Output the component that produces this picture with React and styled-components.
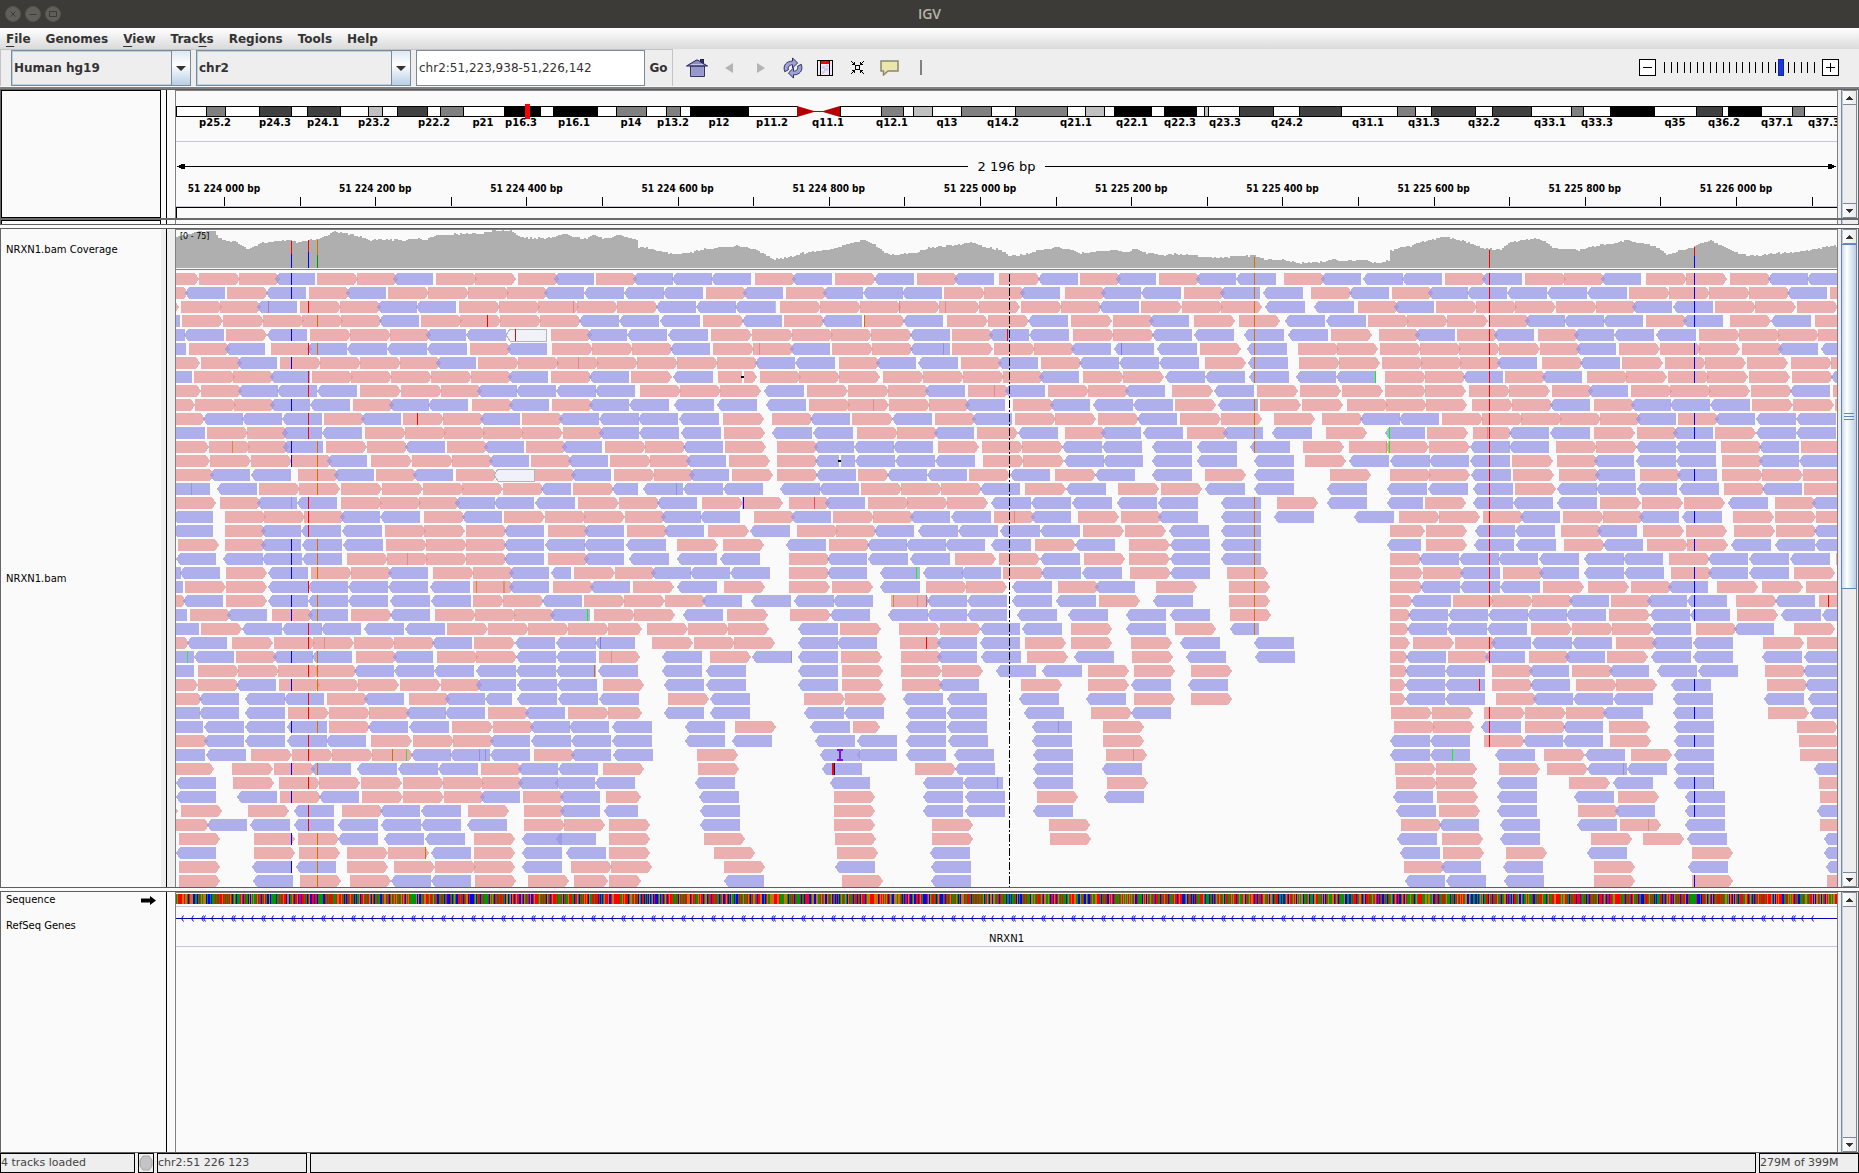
import React from "react";
import styled, { createGlobalStyle, css } from "styled-components";

const Global = createGlobalStyle`
  * { box-sizing: border-box; }
  body { margin: 0; background: #eeeeee; font-family: "DejaVu Sans", sans-serif; font-size: 10px; color: #000; }
  button, input, select { font-family: inherit; margin: 0; }
`;

/* ---------- plot geometry ---------- */
const LEFT = 176;
const PLOT = 1661;
const PITCH = 14;
const READ_H = 12;
const pc = (x) => `${((x - LEFT) / PLOT) * 100}%`;

/* ---------- alignment tiles: r = forward, b = reverse, s = highlighted; optional :length ---------- */
const TILES = [
  {
    origin: 160, unit: 2.6133,
    rows: `r-6 r101 r206 b301 r410 r515 b610 r721 r823 r936 b1030 r1139 b1237 b1339 b1441 r1555
r-35 b65 r175 b277 r389 b486 r596 r700 r805 r908 b1004 b1109 b1212 b1314 r1427 b1524
r-57 r55 r158 b253 r366 r470 b567 b669 r781 r886 r989 r1090 r1194 b1296 b1400 b1503
b-53 r57 r165 r269 r371 r474 b572 r682 r785 r889 r993 b1096 b1199 b1306 r1419 b1520
b-40 b62 r172 b279 r392 r497 r601 b695 b799 s905 r1022 b1117 b1220 b1327 r1440 r1547
b-37 r76 b169 r290 b385 b488 b593 b697 r810 b906 r1024 r1129 r1233 b1332 r1445 r1550
r-2 r107 b201 r314 r418 r523 r628 b721 r831 r936 r1039 r1142 r1247 r1351 r1456 b1556
b-21 r89 r192 b287 r397 r500 r604 r708 r813 b909 r1022 b1121 r1231 b1340 r1458:102
r0 r107 b204 b306 b410 r523 r629 r734 b828 b931 b1035 b1137 r1254 r1359 r1463
r-16 r91 r194 b287 b392 r504 b598 b701 r815 b912 r1024 b1121 b1225 b1342 b1456
r10 b113 b215 b319 r429 b526 r635 r740 b835 r946 b1042 b1146 b1250 b1356 r1471
b13 r123 r227 b319 b423 r536 r640 r743 r845 r947 r1052 b1147 b1253 b1361 r1474
r20 r128 r229 b322 r434 r541 b640 r750 b846 r956 b1050 r1163 r1267 b1366 r1477
r24 r131 r237 r343 b436 r551 r658 r763 b860 r970 b1066 r1176 r1280 b1374 r1487
r35 b130 b237 r361 b454 r564 b661 r774 s872 r980 b1074 r1186 r1290 b1383 r1495
b26 b148 r259 r363 r473 r580 r687 r790 r896 b995:79 r1079 b1180:67 b1261 b1366 b1470
r39 r157 b253 b358 r473 r574 r678 b771 b874 b980 r1092 r1200 b1298 r1416 r1522
b34 r170 r273 r377 b471 b575 r690 b789 r899 r1006 r1109 r1214 b1310 b1411 r1552
b34 r170 b264 b369 b475 r588 r691 r800 b899 r1014 b1108 r1220 b1317 r1432 b1543
r47 r170 b263 b371 b477 r591 r694 r800 b900 b1005 b1108 b1217 r1351 r1471
b41 b164 b267 b371 r489 r593 r696 r800 b900 r1014 b1109 b1225 b1350 b1464
b-50 b52 r172 b282 r395 r500 b595 r713 r818 b912 b1023:51 r1082 r1189 b1283 b1386 b1490
b-45 r65 r172 b282 b387 b492 b596 b705 r818 b912 r1027 b1123 r1236 b1350 r1474
r-38 b60 r172 b282 b388 b492 b600 b707 r818:80 r897 b998 r1108 r1213 r1320 b1416 b1545
b-34 r78 b175 r293 b386 r499 b601 r719 r822 r926 b1019 r1134 r1239 b1366 r1482
b-3 r107 b214 b318 b421 b532 b640 r750 r856 r962 r1067 r1170:90 r1273 r1380 r1484
r-32 b70 r188 r298 r400 r507 r612 b710 r821 b927 b1034 b1136 r1286 r1396 r1501
b-16 b88 r199 b295 b398 r512 b610 r724 r827 b931 b1035 r1147 b1311 r1437 b1546
b-16 r99 r204 r308 r407 b507 b612 b716 b825 b930 b1036 b1145 b1313 b1428
r-9 r99 b198 r311 r412 r518 r627 r734 b827 b932 b1037 r1158 b1316 b1428
r3 b102 b221 b324 r436 b533 r651 b745 b850:70 b932 b1039 b1148 r1328 b1437
b0 b101 b221 r335 r442 r547 b642 b745 r857 b953 r1066 r1171:88 b1318 b1438
b7 b115 b221 b331 r442 b543 b652 r763 r870 b967 b1069 b1180 b1373 r1503
r17 b116 b221 b331 b433 r551 r661 r766 b862 b969 b1074 b1180 b1373 b1494
b13 b121 r238 r345 r449 r554 b656 b757 b862 r977 b1074 b1183 r1403
r34 r188 r298 b394 b514 b621 b726 r839 b935 b1040 r1158 r1406
b41 r191 r311 r416 r525 r635 r739 r841 b936 b1032 b1138 b1397
b41 b200 r314 b415 r528 r635 r741 b836 r949 b1045 r1166:91 b1408
r-60 r55 r230 b351 r476 b574 b683 r805 r951 b1045 b1159:90 b1410
r22 b122 b236 b351 b466 b577 b683 b801 r951 r1056 r1173 b1410
r50 r246 r361 b466 b586 b692 r821 b946 b1034 r1173 r1422
b41 r246 r363 r489 r596 b709 r821 b947 b1060 r1173 r1448
r50 b241 b356 r489 r612 r719 r821 b947 r1074 r1179 r1474
r50 b244 r366 r497 b603 b709 r823 r962 r1082:90 r1173:84 b1473`,
  },
  {
    origin: 740, unit: 2.6133,
    rows: `b135 r248 b350 r463 b560 r677 b778 r889 b982 r1095 b1191 b1296
r120 b217 b321 b423 r533 r638 b732 r849 b944 b1048 r1160 b1254 b1366
r105 r209 r313 r416 r520 r625 r734 r838 b938 r1048 r1154 r1257 b1371
r115 b214 r323 b425 r541 r648 b752 r865 r975 b1068 r1186 r1304
r136 r239 r342 b445 r554 b650 b755 r870 r975 b1076 b1186 b1318
b131 r240 r345 b444 r554 r664 r768 b865 b977 b1089 r1202 b1324
b144 r259 b356 b465 r578 b675 r787 b886 b990 b1096 r1215 b1327
r52 r155 r260 r374 r478 r582 r687 b781 r896 r1001 b1110 b1215 b1330
b62 r175 r281 r387 b483 r596 b692 r805 r909 b1006 r1129 b1238 r1351
b67 r180 r283 r389 r494 b589 r713 b810 b922 b1027 r1137 b1249 r1359
r84 b182 r293 b397 r510 b606 r719 r823 r936 b1037 r1150 r1257 r1396
b83 b190 r306 r409 b507 r619 b726 r849 b944 b1052 r1168 b1262 b1389
r97 b194 b298 b400 r517 r632 r738 b841 b946 b1076 b1193 b1332
r97 b197 b300 b406 b509 r635 r739 b846 b949 b1076 b1193 b1342
r97 b198 r308:82 b384 b489 r598 b705 r823 b927 b1076 r1215 b1342
b104 b206 r316 r421 r524 b627 r745 b851 r988 r1100 b1215 b1344
r128 b222 r335 r437 r541 b655 b761 b867 b985 b1092 b1257 r1403
b134 r243 r348 b444 b551 r664 b760 r883 r996 b1092 b1257 b1395
r149 r252 b349 b464 b569 b679 b785 r896 r1006 b1120 b1258
b119 r233 b331 b434 b536 b655 r771 b875 r1017 b1123 b1258
r128 b227 b334 b445 r562 r677 b785 r899 r1017 b1125 b1258
r128 b227 b367 b477 b578 r687 b786 b893 r1019 b1125 r1273
r128 r240 b367 r486 r591 b710 r831 b927 r1087 r1278
b140 b243 r395:103 b489 b593 b712 b825 r938 b1079 r1278
r131 b235 b386 b488 b593 b725 b856 b1010 b1125 r1281
b151 r261 r416 r523 b628 b736 r865 b1010 r1137 b1280:76
b151 b253 r418 b516 b628 r745 r865 r1022 b1151 b1344
b151 r264 r421 b516 b631 r750 b874 r1024 b1165 b1347
b151 r267 r421 r528 b670 b790 r909 r1030 r1179
b151 r267 r423 b520 r734 r909 b1021 b1170
r167 r274 b427 b540 b728 b905 r1030 r1179
b166 b271 b433 b540 b741 r917 b1021
b184 r295:71 b435 b540 b762 r949
b197 b307 b435 b543 b762 r949
b208 b307 b435 b560 b767 r956
b215 r457 b563 b767 b947
b234 b477 b582 b767 r959
r246 b479 b587 r776 b952
r246 b479 b587 b767
r246 r502 r808
r248 r502 r810
r253 b496
b249 b498
r267 b498`,
  },
  {
    origin: 1280, unit: 2.7081,
    rows: `r11 b110 b224 b330 r447 b547 r663 r769 b869 r991 r1099 r1219 b1321 b1427
r84 b186 r303 b400 b506 b615 b722 b831 r945 r1053 r1161 r1270 b1372 r1489
b91 r211 b308 r422 r531 r636 r747 r856 b953 b1064 r1178 r1286 r1400
b13 b124 r238 r345 r452 r565 b663 b768 b874 r991 b1091 r1219 b1329 r1449
b23 r138 r268 b365 r479 b580 r699 b797 b904 b1018 r1135 r1243 r1349 r1457
r49 r154 r271 r379 r486 r593 r704 b801 r918 r1029 r1135 r1251 b1348 b1466
r51 r160 r276 r383 r488 b587 r710 b812 r926 r1043 r1151 r1265 r1384 r1492
b42 b152 r284 r393 b495 r609 b709 r831 r938 r1051 r1157 r1270 r1387 b1491
r54 r168 r284 r393 r512 r620 r737 b833 r951 r1057 r1163 r1276 b1380 r1498
r60 r181 r288 r396 r520 r628 b731 r850 b950 b1055 b1164 r1278 r1389 r1503
r114 b216 b322 r439 r547 r653 r759 r867 b963 r1078 b1178 b1289 b1397
r125 b283 r398 r523:106 b619 b730 r850 r967 b1064 r1178 b1288 b1397
r62 r187 r293 r404 b514 b620 r747 r856 b965 b1072 r1194 b1297 r1411
r68 b186 b297 b404 b514 r628 r750 b850 b965 b1072 r1197 b1297 b1405
r135 r298 r404 b517 r631 r756 b852 r975 b1074 r1197 r1306 r1416
b126 b289 b400 b522 r636 b749 b857 b966 b1080 r1202 b1305 r1419
b128 b289:98 r393 b522 b631 b749 r867 r980 r1094 b1212 r1341 b1441
b201 r322 r431 r550 b649 r766 r875 b972 b1090 r1227 r1341 r1451
r298:94 r395 b527 b636 r761 b858 r983 r1099 r1229 r1343 b1445
b289:93 r395 b526 b638 r769 b874 r994 r1102 b1220 b1340 b1450
r298:88 b376 b484 b590 b701 b822 b928 r1053 b1158 b1269 b1380 r1506
r298:90 r387 b487 r604 b701 b822 b931 r1059 b1160 b1271 r1392
r298:90 b378 b487 b595 r712 r834 r951 b1050 r1183 r1305 r1424
r298:62 b354 r469 r573 r682 b782 r896 b993 b1101 r1235 b1340 r1460
r298:56 b347 b454 b563 b668 b774 r891 b1002 b1110 r1238 b1356 b1468
r298:52 b343 b452 b560 r680 r791 r899 b1004 r1127 b1229 r1392
r298:54 r360 r474 b571 b682 b790 r910 b1007 b1118 r1308 r1427
r298:50 b340 r455 b554 r674 b771 r886 b1006 b1118 b1304 b1418
r298:50 b339 b446 r574 b674 r791 b890 b1022 b1131 r1313 b1417
r298:44 b338 b446 r574 b676 r802 r910 b1058 r1319 b1422
r298:42 b338 b446 r585 b685 b794 b902 b1063 b1310 b1429
r301 r412 r552 r663 r775 b874 b1063 r1322 b1434
r309 r414 b543 r663 b766 r891 b1066 r1400
b299 b407 r552 b657 b766 r894 b1066 r1406
b299 b406 b583 r715 b825 r951 b1066 r1408
r311 r422 r593 r723 b831 b941 b1066 b1447
r314 r422 b589 r783 b901 b1068 r1460
b307 r425 b589 b797 r915 b1096 r1462
b315 r431 b589 r807 b906 b1098 b1455
r328 b430 b595 b803 r921 b1098 r1462
b318 r439 b597 r842 r983 b1101 b1474
b326 r441 r612 b832 r1116 b1474
r336 b435 b603 r850 b1106 b1479
b338 b449 b606 r850 r1116 r1481`,
  },
];

const READS = TILES.flatMap(({ origin, unit, rows }) =>
  rows.split("\n").flatMap((line, row) =>
    line.trim().split(" ").map((tok) => {
      const [start, len] = tok.slice(1).split(":").map(Number);
      const x = Math.round(origin + start / unit) - LEFT;
      const w = len ? Math.round(len / unit) : tok[0] === "r" ? 41 : 40;
      return { kind: tok[0], row, x, w };
    })
  )
);

const BLUE = "#0000ff";
const RED = "#ff0000";
const ORANGE = "#d17105";
const GREEN = "#00ff00";
const FADE_R = "rgba(200,90,90,.4)";
const FADE_B = "rgba(100,100,200,.4)";

/* variant columns: x, colour, rows (1-based) */
const COLUMNS = [
  [291, BLUE, [1, 2, 5, 7, 10, 13, 14, 20, 21, 22, 24, 25, 28, 30, 33, 36, 38, 41, 43]],
  [308, RED, [3, 6, 8, 9, 11, 12, 17, 18, 19, 23, 26, 27, 29, 31, 32, 34, 35, 37, 39, 40]],
  [317, ORANGE, [4, 6, 13, 14, 15, 16, 20, 21, 22, 24, 25, 28, 29, 30, 33, 36, 41, 42, 43, 44]],
  [1254, ORANGE, [1, 2, 3, 4, 5, 6, 7, 8, 10, 11, 12, 13, 17, 18, 19, 20, 21, 22, 23, 24, 25, 26]],
  [1489, RED, [1, 2, 3, 4, 5, 6, 7, 8, 9, 10, 11, 12, 13, 14, 15, 16, 17, 18, 19, 20, 21, 22, 23, 24, 27, 28, 32, 33, 34]],
  [1694, BLUE, [1, 2, 3, 4, 6, 7, 8, 11, 12, 15, 18, 20, 22, 23, 24, 25, 30, 32, 34, 37, 38, 39, 44]],
];

/* isolated mismatches: row, x, colour, width */
const MARKS = [
  [3, 268, "#9a7cc8"], [3, 573, FADE_R], [4, 487, RED], [5, 515, RED], [7, 557, FADE_R], [7, 578, FADE_R],
  [11, 417, RED], [13, 232, "#dc8246"], [16, 191, "#8c9bd2"], [16, 676, FADE_B], [17, 291, FADE_B], [17, 743, BLUE],
  [21, 407, FADE_R], [23, 476, "#dc8246"], [23, 503, "#d9917a", 2], [25, 587, GREEN], [27, 324, FADE_R],
  [27, 600, "#7878eb"], [28, 187, "#3cdc6e"], [28, 611, FADE_R], [29, 594, ORANGE], [35, 392, ORANGE],
  [35, 406, "#3cdc3c"], [35, 479, FADE_B], [35, 485, FADE_B], [42, 425, ORANGE],
  [3, 775, FADE_B], [3, 899, FADE_R], [3, 945, FADE_R], [4, 864, ORANGE], [5, 1007, RED], [6, 759, FADE_R],
  [6, 943, FADE_B], [6, 1121, "#7878eb"], [9, 994, FADE_R], [10, 873, FADE_R], [17, 814, "#f04b4b"],
  [18, 1014, "#eb8282"], [22, 916, GREEN], [24, 893, "#dc8246"], [24, 917, FADE_R], [24, 926, "#a078be"],
  [27, 926, RED], [28, 791, FADE_B], [33, 1058, FADE_B], [35, 1133, FADE_R], [36, 832, RED, 2], [36, 834, "#000090"],
  [37, 997, FADE_B], [8, 1375, GREEN], [12, 1389, GREEN], [13, 1389, GREEN], [13, 1386, "#d2966e"],
  [12, 1487, FADE_R], [24, 1828, RED], [30, 1479, RED], [35, 1452, GREEN], [36, 1623, FADE_B], [37, 1713, FADE_B],
  [40, 1648, FADE_R],
];

const DELETIONS = [[8, 742], [14, 839]];

/* coverage profile: x, y of the top edge */
const COVER = [
  176, 237, 186, 235, 198, 231, 215, 232, 217, 238, 237, 243, 246, 249, 255, 246, 261, 243, 277, 241, 291, 240, 297, 243,
  308, 240, 318, 239, 326, 235, 334, 231, 344, 234, 352, 235, 364, 238, 370, 240, 380, 239, 389, 240, 403, 240, 415, 239,
  427, 239, 437, 235, 455, 234, 478, 234, 492, 231, 510, 230, 518, 237, 530, 238, 550, 238, 563, 234, 573, 237, 585, 239,
  593, 235, 605, 239, 620, 235, 628, 238, 637, 240, 638, 247, 652, 249, 661, 252, 675, 255, 691, 252, 703, 249, 719, 248,
  735, 246, 747, 247, 758, 251, 772, 259, 790, 257, 802, 253, 826, 250, 836, 248, 849, 243, 863, 240, 871, 243, 885, 253,
  893, 255, 913, 253, 928, 248, 944, 246, 956, 245, 970, 242, 980, 246, 1000, 250, 1009, 256, 1023, 255, 1039, 250,
  1055, 247, 1071, 250, 1079, 253, 1094, 252, 1110, 250, 1126, 252, 1136, 249, 1146, 253, 1162, 255, 1174, 254,
  1193, 255, 1205, 257, 1217, 258, 1240, 256, 1254, 256, 1264, 259, 1283, 260, 1299, 263, 1323, 262, 1333, 259,
  1343, 261, 1362, 260, 1378, 263, 1389, 260, 1390, 251, 1398, 248, 1410, 246, 1418, 242, 1429, 240, 1443, 237,
  1461, 240, 1473, 245, 1487, 249, 1501, 249, 1508, 243, 1524, 240, 1534, 238, 1544, 241, 1552, 248, 1580, 250,
  1587, 248, 1599, 245, 1615, 243, 1627, 240, 1639, 243, 1653, 246, 1666, 254, 1674, 252, 1690, 248, 1698, 244,
  1710, 241, 1720, 245, 1734, 252, 1749, 256, 1769, 254, 1781, 253, 1801, 252, 1812, 250, 1828, 246, 1838, 246,
];

const noise = (n) => {
  let t = (n * 2654435761) >>> 0;
  t ^= t >>> 15;
  t = Math.imul(t, 2246822519) >>> 0;
  t ^= t >>> 13;
  return (t >>> 0) / 4294967296;
};

const coverPath = (() => {
  let d = "M0 38";
  let k = 0;
  for (let x = LEFT; x < LEFT + PLOT; x += 2) {
    while (k + 4 < COVER.length && COVER[k + 2] <= x) k += 2;
    const t = (x - COVER[k]) / (COVER[k + 2] - COVER[k]);
    const y = COVER[k + 1] + (COVER[k + 3] - COVER[k + 1]) * t + (noise(x) - 0.5) * 1.6;
    d += `V${Math.max(0, Math.round(y - 230))}H${x - LEFT + 2}`;
  }
  return d + "V38Z";
})();

const COVER_BARS = [
  [291, 241, 254, RED], [291, 254, 268, BLUE], [308, 240, 252, RED], [308, 252, 268, BLUE],
  [317, 240, 255, ORANGE], [317, 255, 268, "#009600"], [1254, 257, 268, ORANGE], [1489, 250, 268, RED],
  [1694, 247, 256, RED], [1694, 256, 268, BLUE],
];

/* chromosome bands: start x and shade */
const W = "#ffffff", L = "#c0c0c0", G = "#808080", D = "#404040", K = "#000000";
const BANDS = [
  [176, W], [206, G], [225, W], [259, D], [291, W], [307, D], [340, W], [368, L], [382, W], [397, D], [427, W],
  [440, G], [463, W], [504, K], [540, W], [553, K], [597, W], [616, G], [646, W], [666, G], [680, W], [690, K],
  [748, W], [797, null], [840, W], [881, G], [903, W], [913, L], [932, W], [961, G], [991, W], [1015, G], [1067, W],
  [1085, L], [1104, W], [1114, K], [1151, W], [1164, K], [1196, W], [1204, L], [1208, W], [1239, D], [1273, W],
  [1299, D], [1341, W], [1397, G], [1415, W], [1431, D], [1475, W], [1492, D], [1531, W], [1571, G], [1583, W],
  [1610, K], [1654, W], [1696, D], [1722, W], [1728, K], [1761, W], [1792, G], [1804, W], [1837, null],
];

const BAND_LABELS = [
  ["p25.2", 215], ["p24.3", 275], ["p24.1", 323], ["p23.2", 374], ["p22.2", 434], ["p21", 483], ["p16.3", 521],
  ["p16.1", 574], ["p14", 631], ["p13.2", 673], ["p12", 719], ["p11.2", 772], ["q11.1", 828], ["q12.1", 892],
  ["q13", 947], ["q14.2", 1003], ["q21.1", 1076], ["q22.1", 1132], ["q22.3", 1180], ["q23.3", 1225], ["q24.2", 1287],
  ["q31.1", 1368], ["q31.3", 1424], ["q32.2", 1484], ["q33.1", 1550], ["q33.3", 1597], ["q35", 1675],
  ["q36.2", 1724], ["q37.1", 1777], ["q37.3", 1824],
];

const RULER = Array.from({ length: 22 }, (_, i) => ({
  x: 224 + i * 75.6,
  label: i % 2 ? null : `51 ${224 + Math.floor(i / 10)} ${String((i % 10) * 100).padStart(3, "0")} bp`,
}));

/* ---------- window chrome ---------- */
const Frame = styled.div`
  display: flex;
  flex-direction: column;
  min-height: 100vh;
  overflow: hidden;
`;

const TitleBar = styled.header`
  display: grid;
  grid-template-columns: 1fr auto 1fr;
  align-items: center;
  height: 28px;
  padding: 0 5px;
  background: #3c3b37;
`;

const Title = styled.h1`
  margin: 0;
  font: 600 14px/20px "Open Sans", sans-serif;
  color: #b8b5a9;
`;

const WindowButtons = styled.div`
  display: flex;
  gap: 4px;
`;

const WindowButton = styled.button`
  width: 16px;
  height: 16px;
  padding: 0;
  border: 1px solid #56554f;
  border-radius: 50%;
  background: #605f5a;
  color: #3c3b37;
  svg { display: block; width: 14px; height: 14px; }
`;

const MenuBar = styled.nav`
  display: flex;
  gap: 15px;
  height: 21px;
  padding: 0 6px;
  background: linear-gradient(#ffffff, #dadada);
`;

const MenuItem = styled.button`
  padding: 0;
  border: 0;
  background: none;
  font-size: 12px;
  line-height: 20px;
  font-weight: bold;
  color: #333;
  u { text-underline-offset: 3px; }
`;

const ToolBar = styled.div`
  display: flex;
  align-items: center;
  height: 38px;
  padding-right: 20px;
  border-bottom: 1px solid #f6f6f6;
  background: #eeeeee;
`;

const LocusGroup = styled.form`
  display: flex;
  align-items: center;
  align-self: stretch;
  gap: 5px;
  padding-left: 10px;
  border: 1px solid #c4c4c4;
  border-bottom: 0;
`;

const Combo = styled.label`
  position: relative;
  display: block;
  width: ${(p) => p.$width}px;
  height: 36px;
  border: 1px solid #7a8a99;
  svg {
    position: absolute;
    top: 0;
    right: 0;
    width: 19px;
    height: 100%;
    border-left: 1px solid #7a8a99;
    background: linear-gradient(#dde8f3, #ffffff 40%, #b8cfe5);
    pointer-events: none;
  }
`;

const Select = styled.select`
  appearance: none;
  width: 100%;
  height: 100%;
  padding: 0 20px 0 1px;
  border: 1px solid #b8cfe5;
  background: #eeeeee;
  font-size: 12px;
  font-weight: bold;
  color: #333;
`;

const LocusInput = styled.input`
  width: 229px;
  height: 36px;
  padding: 0 2px;
  border: 1px solid #7a8a99;
  border-radius: 0;
  background: #fff;
  font-size: 12px;
  color: #333;
`;

const GoButton = styled.button`
  align-self: stretch;
  width: 27px;
  margin-left: -5px;
  padding: 0;
  border: 0;
  background: none;
  font-size: 12px;
  font-weight: bold;
  color: #333;
`;

const IconRow = styled.div`
  display: flex;
  flex: 1;
  align-items: center;
  padding-left: 8px;
`;

const IconButton = styled.button`
  display: grid;
  place-items: center;
  width: 32px;
  height: 24px;
  padding: 0;
  border: 0;
  background: none;
  svg { display: block; }
`;

const IconRule = styled.span`
  width: 2px;
  height: 15px;
  margin-left: 15px;
  background: #808080;
`;

const Zoomer = styled.div`
  display: flex;
  align-items: center;
  gap: 5px;
`;

const ZoomButton = styled.button`
  width: 17px;
  height: 17px;
  padding: 0;
  border: 1px solid #000;
  background: #fff;
  svg { display: block; width: 15px; height: 15px; }
`;

const ZoomTrack = styled.div`
  position: relative;
  width: 156px;
  height: 17px;
  svg { display: block; width: 100%; height: 100%; }
`;

const ZoomRange = styled.input`
  position: absolute;
  inset: 0;
  width: 100%;
  height: 17px;
  margin: 0;
  appearance: none;
  background: none;
  &::-webkit-slider-thumb {
    appearance: none;
    width: 6px;
    height: 17px;
    border: 1px solid #0f28b4;
    background: #1937dc;
  }
`;

/* ---------- track panels ---------- */
const Sash = styled.div`
  height: ${(p) => p.$height}px;
  background: ${(p) => p.$color};
`;

const Panel = styled.section`
  display: flex;
  flex: ${(p) => (p.$grow ? "1 0 auto" : "0 0 auto")};
  height: ${(p) => (p.$height ? `${p.$height}px` : "auto")};
  border-left: 1px solid #666;
  border-right: 1px solid #666;
  background: #fafafa;
`;

const Names = styled.div`
  width: 160px;
  flex: none;
  background: #fafafa;
  ${(p) => p.$boxed && css`border: 1px solid #000;`}
  ${(p) => p.$open && css`border-bottom: 0;`}
`;

const Gutter = styled.div`
  flex: none;
  width: 15px;
  border-right: 1px solid #808080;
  background: linear-gradient(90deg, ${(p) => p.$shade} 5px, #000 5px, #000 6px, ${(p) => p.$shade} 6px);
`;

const Name = styled.div`
  display: flex;
  align-items: center;
  justify-content: space-between;
  height: ${(p) => p.$height}px;
  padding: 0 5px;
  line-height: 12px;
`;

const Data = styled.div`
  display: flex;
  flex-direction: column;
  flex: 1;
  min-width: 0;
  background: #fafafa;
  > svg { display: block; flex: none; width: 100%; overflow: hidden; }
`;

const HairLine = styled.div`
  flex: none;
  height: 1px;
  background: ${(p) => p.$color};
  margin: ${(p) => p.$top || 0}px 0 ${(p) => p.$bottom || 0}px;
`;

const RoiStrip = styled.div`
  flex: 1;
  border: 1px solid #000;
  border-right: 0;
  border-bottom: 0;
`;

const PlotText = styled.text`
  font-family: "DejaVu Sans", sans-serif;
  font-size: ${(p) => p.$size || 10}px;
  font-weight: ${(p) => (p.$bold ? "bold" : "normal")};
  text-anchor: ${(p) => p.$anchor || "middle"};
  fill: #000;
`;

const RulerText = styled(PlotText)`
  font-family: "DejaVu Sans Condensed", "DejaVu Sans", sans-serif;
  font-stretch: condensed;
`;

const PanelBar = styled.div`
  display: flex;
  flex-direction: column;
  flex: none;
  width: 21px;
  padding-right: 1px;
  border-left: 1px solid #808080;
  background: linear-gradient(90deg, #eeeeee 3px, #7a8a99 3px, #7a8a99 4px, #b8cfe5 4px, #b8cfe5 5px, #eeeeee 5px);
`;

const BarButton = styled.button`
  flex: none;
  height: 15px;
  margin-left: 5px;
  padding: 0;
  border: solid #7a8a99;
  border-width: 1px 1px 1px 0;
  background: linear-gradient(90deg, #ffffff, #eaeaea);
  svg { display: block; width: 100%; height: 12px; }
`;

const BarTrack = styled.div`
  flex: 1;
  margin-left: 5px;
  border-right: 1px solid #7a8a99;
`;

const BarThumb = styled.div`
  display: grid;
  place-content: center;
  gap: 2px;
  height: 345px;
  margin: 0 -1px 0 -2px;
  border: 1px solid #6382bf;
  background: linear-gradient(90deg, #c8dbee, #ffffff 35%, #b8cfe5);
  i { width: 10px; height: 1px; background: #6382bf; }
`;

/* ---------- status bar ---------- */
const StatusBar = styled.footer`
  display: flex;
  gap: 3px;
  height: 20px;
  background: #eeeeee;
`;

const StatusCell = styled.div`
  flex: ${(p) => (p.$width ? `0 0 ${p.$width}px` : "1")};
  height: 20px;
  border: 1px solid #000;
  font-size: 11px;
  line-height: 17px;
  white-space: nowrap;
  color: #444;
  svg { display: block; width: 100%; height: 100%; }
`;

/* ---------- parts ---------- */
const Arrow = ({ up }) => (
  <svg viewBox="0 0 16 12" preserveAspectRatio="xMidYMid meet" shapeRendering="crispEdges">
    <path d={up ? "M4 8h8l-4 -4z" : "M4 4h8l-4 4z"} fill="#333" />
  </svg>
);

function ScrollBar({ label, thumb }) {
  return (
    <PanelBar>
      <BarButton aria-label={`${label} up`}><Arrow up /></BarButton>
      <BarTrack>{thumb && <BarThumb><i /><i /><i /></BarThumb>}</BarTrack>
      <BarButton aria-label={`${label} down`}><Arrow /></BarButton>
    </PanelBar>
  );
}

function ComboBox({ label, value, width }) {
  return (
    <Combo $width={width}>
      <Select aria-label={label} defaultValue={value}><option>{value}</option></Select>
      <svg viewBox="0 0 18 34"><path d="M4 15h10l-5 5z" fill="#333" /></svg>
    </Combo>
  );
}

function Ideogram() {
  return (
    <svg height="50">
      {BANDS.slice(0, -1).map(([x, fill], i) =>
        fill ? <rect key={x} x={pc(x)} y="16" width={`${((BANDS[i + 1][0] - x) / PLOT) * 100}%`} height="10" fill={fill} shapeRendering="crispEdges" /> : null
      )}
      {BANDS.slice(0, -1).map(([x]) => (
        <rect key={x} x={pc(x)} y="15" width="1" height="11" shapeRendering="crispEdges" />
      ))}
      <rect x="0" y="15" width={pc(797)} height="1" />
      <rect x="0" y="25" width={pc(797)} height="1" />
      <rect x={pc(840)} y="15" width="100%" height="1" />
      <rect x={pc(840)} y="25" width="100%" height="1" />
      <svg x={pc(797)} y="15" width={`${(43 / PLOT) * 100}%`} height="11" viewBox="0 0 43 11" preserveAspectRatio="none">
        <path d="M0 0v11L17 6h9l17 5V0L26 5h-9z" fill="#b40000" />
      </svg>
      <rect x={pc(525)} y="13" width="5" height="15" fill="#ff0000" />
      {BAND_LABELS.map(([t, x]) => <PlotText $bold key={t} x={pc(x)} y="35">{t}</PlotText>)}
    </svg>
  );
}

function Ruler() {
  return (
    <svg height="64" shapeRendering="crispEdges">
      <rect x="1" y="24" width={pc(967)} height="1" />
      <rect x={pc(1045)} y="24" width={`${(791 / PLOT) * 100}%`} height="1" />
      <path d="M1 24.5l5 -2.5h3v5h-3z" />
      <svg x="100%" y="0" width="10" height="40" overflow="visible"><path d="M-1 24.5l-5 -2.5h-3v5h3z" /></svg>
      <PlotText $size={13} x="50%" y="29">2 196 bp</PlotText>
      {RULER.map(({ x, label }) => (
        <React.Fragment key={x}>
          <rect x={pc(x)} y="55" width="1" height="9" />
          {label && <RulerText $bold x={pc(x)} y="50">{label}</RulerText>}
        </React.Fragment>
      ))}
    </svg>
  );
}

function Coverage() {
  return (
    <svg height="38" viewBox={`0 0 ${PLOT} 38`} preserveAspectRatio="none" shapeRendering="crispEdges">
      <path d={coverPath} fill="#afafaf" />
      {COVER_BARS.map(([x, y1, y2, fill]) => (
        <rect key={`${x}-${y1}`} x={x - LEFT} y={y1 - 230} width="1" height={y2 - y1} fill={fill} />
      ))}
      <PlotText $size={8} $anchor="start" x="4" y="9">[0 - 75]</PlotText>
    </svg>
  );
}

const readShape = ({ kind, x, w, row }) => {
  const y = row * PITCH;
  return kind === "r"
    ? `M${x} ${y}h${w - 4}l4 6l-4 6h${4 - w}z`
    : `M${x + w} ${y}h${4 - w}l-4 6l4 6h${w - 4}z`;
};

const READ_FILL = { r: "rgba(230,150,150,.75)", b: "rgba(150,150,230,.75)", s: "rgba(240,240,250,.9)" };

function Pileup() {
  return (
    <svg height="614" viewBox={`0 0 ${PLOT} 614`} preserveAspectRatio="none" shapeRendering="crispEdges">
      {READS.map((r, i) => (
        <path key={i} d={readShape(r)} fill={READ_FILL[r.kind]} stroke={r.kind === "s" ? "#b4b4b4" : "none"} />
      ))}
      {COLUMNS.flatMap(([x, fill, rows]) =>
        rows.map((row) => <rect key={`${x}-${row}`} x={x - LEFT} y={(row - 1) * PITCH} width="1" height={READ_H} fill={fill} />)
      )}
      {MARKS.map(([row, x, fill, w = 1]) => (
        <rect key={`${row}-${x}`} x={x - LEFT} y={(row - 1) * PITCH} width={w} height={READ_H} fill={fill} />
      ))}
      {DELETIONS.map(([row, x]) => (
        <g key={row}>
          <rect x={x - LEFT} y={(row - 1) * PITCH} width="2" height={READ_H} fill="#fafafa" />
          <rect x={x - LEFT - 1} y={(row - 1) * PITCH + 5} width="3" height="2" />
        </g>
      ))}
      <path d={`M${837 - LEFT} 476h6v2h-2v8h2v2h-6v-2h2v-8h-2z`} fill="#7814dc" />
      <path d={`M${1009.5 - LEFT} 0V614`} stroke="#000" strokeDasharray="8 2 2 2" strokeDashoffset="-1" />
    </svg>
  );
}

const BASES = ["#ff0000", "#ff0000", "#ff0000", "#009600", "#009600", "#009600", "#0000ff", "#0000ff", "#d17105", "#d17105"];

function Sequence() {
  const step = 0.7536;
  return (
    <svg height="10" viewBox={`0 0 ${PLOT} 10`} preserveAspectRatio="none" shapeRendering="crispEdges">
      {Array.from({ length: 2204 }, (_, i) => (
        <rect key={i} x={i * step} width={step + 0.3} height="10" fill={BASES[Math.floor(noise(i + 7) * 10)]} />
      ))}
    </svg>
  );
}

function Gene() {
  const heads = Array.from({ length: 164 }, (_, i) => {
    const x = 5 + i * 10;
    const head = (at) => `M${at + 2.5} 8.5l-2 3l2 3`;
    return i % 3 === 2 ? head(x) + head(x + 2) : head(x);
  }).join("");
  return (
    <svg height="39" viewBox={`0 0 ${PLOT} 39`} preserveAspectRatio="none">
      <path d={heads} fill="none" stroke="#0000c8" />
      <rect y="11" width={PLOT} height="1" fill="#0000b4" shapeRendering="crispEdges" />
      <PlotText x={PLOT / 2} y="35">NRXN1</PlotText>
    </svg>
  );
}

const HomeIcon = () => (
  <svg width="22" height="18" viewBox="0 0 22 18">
    <path d="M4.500 7h14v10.500h-14z" fill="#a0a0d4" stroke="#33335c" />
    <path d="M6 9h11M6 11h11M6 13h11M6 15h11" stroke="#8484bc" strokeWidth="0.600" />
    <rect x="14.500" y="0.500" width="3" height="5" fill="#33335c" stroke="#22224a" />
    <path d="M0.500 7L8 2.500L11 0.800L14 2.500L21.500 7z" fill="#8c8cc4" stroke="#22224a" />
    <path d="M5 5.500h12" stroke="#c4c4e8" />
  </svg>
);

const RefreshIcon = () => (
  <svg width="22" height="22" viewBox="0 0 24 24" fill="#a0a0dc" stroke="#22224a" strokeLinejoin="round">
    <path d="M3 16C0.500 9 5 4.500 11.500 4.500V1l5.500 5.500L11.500 12V8.500C8 8.500 6 11 7 14z" />
    <path d="M21 8c2.500 7-2 11.500-8.500 11.500V23L7 17.500l5.500-5.500v3.500C16 15.500 18 13 17 10z" />
  </svg>
);

const RegionIcon = () => (
  <svg width="16" height="16" viewBox="0 0 16 16" shapeRendering="crispEdges">
    <rect x="0.500" y="0.500" width="15" height="15" fill="#f0e8f6" stroke="#000" />
    <path d="M3.500 1v14M12.500 1v14" stroke="#000" />
    <rect x="4" y="1" width="8" height="3" fill="#ff0000" />
    <path d="M5 6h3v2h3v3h-3v2h-3v-2h2v-2h-2z" fill="#c8d0f4" />
    <path d="M9 5h2v2h-2zM5 12h2v2h-2z" fill="#f4c0cc" />
  </svg>
);

const FitIcon = () => (
  <svg width="13" height="13" viewBox="0 0 13 13" fill="none" stroke="#000" shapeRendering="crispEdges">
    <rect x="4.500" y="4.500" width="4" height="4" />
    <path d="M0 0l4 4M13 0l-4 4M0 13l4 -4M13 13l-4 -4" />
    <path d="M3.500 1v2.500H1M9.500 1v2.500h2.500M3.500 12V9.500H1M9.500 12V9.500h2.500" />
  </svg>
);

const BubbleIcon = () => (
  <svg width="19" height="16" viewBox="0 0 19 16">
    <path d="M1 1h17v10H8l-4.500 4V11H1z" fill="#ebe6aa" stroke="#8c8870" strokeWidth="1.500" />
  </svg>
);

const Triangle = ({ back }) => (
  <svg width="10" height="10" viewBox="0 0 10 10"><path d={back ? "M9 0v10L1 5z" : "M1 0v10L9 5z"} fill="#b4b4b4" /></svg>
);

export default function App() {
  return (
    <Frame>
      <Global />
      <TitleBar>
        <WindowButtons>
          <WindowButton aria-label="Close"><svg viewBox="0 0 14 14" stroke="currentColor"><path d="M4.500 4.500l5 5M9.500 4.500l-5 5" /></svg></WindowButton>
          <WindowButton aria-label="Minimize"><svg viewBox="0 0 14 14" stroke="currentColor"><path d="M3.500 7.500h7" /></svg></WindowButton>
          <WindowButton aria-label="Maximize"><svg viewBox="0 0 14 14" stroke="currentColor" fill="none"><path d="M3.500 4.500h7v5h-7z" /></svg></WindowButton>
        </WindowButtons>
        <Title>IGV</Title>
      </TitleBar>

      <MenuBar>
        <MenuItem><u>F</u>ile</MenuItem>
        <MenuItem>Genomes</MenuItem>
        <MenuItem><u>V</u>iew</MenuItem>
        <MenuItem>Trac<u>k</u>s</MenuItem>
        <MenuItem>Regions</MenuItem>
        <MenuItem>Tools</MenuItem>
        <MenuItem>Help</MenuItem>
      </MenuBar>

      <ToolBar>
        <LocusGroup onSubmit={(e) => e.preventDefault()}>
          <ComboBox label="Genome" value="Human hg19" width={180} />
          <ComboBox label="Chromosome" value="chr2" width={215} />
          <LocusInput aria-label="Locus" defaultValue="chr2:51,223,938-51,226,142" />
          <GoButton>Go</GoButton>
        </LocusGroup>
        <IconRow>
          <IconButton aria-label="Home"><HomeIcon /></IconButton>
          <IconButton aria-label="Back"><Triangle back /></IconButton>
          <IconButton aria-label="Forward"><Triangle /></IconButton>
          <IconButton aria-label="Refresh"><RefreshIcon /></IconButton>
          <IconButton aria-label="Define region"><RegionIcon /></IconButton>
          <IconButton aria-label="Fit tracks"><FitIcon /></IconButton>
          <IconButton aria-label="Popup text"><BubbleIcon /></IconButton>
          <IconRule />
        </IconRow>
        <Zoomer>
          <ZoomButton aria-label="Zoom out"><svg viewBox="0 0 15 15" stroke="#000"><path d="M3 7.500h9" /></svg></ZoomButton>
          <ZoomTrack>
            <svg viewBox="0 0 156 17" preserveAspectRatio="none" shapeRendering="crispEdges">
              {Array.from({ length: 24 }, (_, i) => <rect key={i} x={Math.round(3 + i * 6.5)} y="3" width="1" height="11" />)}
            </svg>
            <ZoomRange type="range" aria-label="Zoom level" min="0" max="23" defaultValue="18" />
          </ZoomTrack>
          <ZoomButton aria-label="Zoom in"><svg viewBox="0 0 15 15" stroke="#000"><path d="M3 7.500h9M7.500 3v9" /></svg></ZoomButton>
        </Zoomer>
      </ToolBar>

      <Sash $height={2} $color="#808080" />
      <Sash $height={1} $color="#5e5e5e" />
      <Panel $height={128}>
        <Names $boxed />
        <Gutter $shade="#fafafa" />
        <Data>
          <HairLine $color="#808080" />
          <Ideogram />
          <HairLine $color="#c8c8d2" />
          <Ruler />
          <HairLine $color="#c8c8d2" />
          <RoiStrip />
        </Data>
        <ScrollBar label="Header" />
      </Panel>
      <Sash $height={2} $color="#6a6a6a" />
      <Panel $height={4}>
        <Names $boxed $open />
        <Gutter $shade="#fafafa" />
        <Data />
        <PanelBar />
      </Panel>
      <Sash $height={1} $color="#5e5e5e" />
      <Sash $height={3} $color="#fafafa" />
      <Sash $height={1} $color="#5e5e5e" />

      <Panel>
        <Names>
          <Name $height={42}>NRXN1.bam Coverage</Name>
          <Name $height={615}>NRXN1.bam</Name>
        </Names>
        <Gutter $shade="#eeeeee" />
        <Data>
          <HairLine $color="#808080" />
          <Coverage />
          <HairLine $color="#808080" $top={1} $bottom={3} />
          <Pileup />
        </Data>
        <ScrollBar label="Alignments" thumb />
      </Panel>
      <Sash $height={1} $color="#5e5e5e" />
      <Sash $height={3} $color="#fafafa" />
      <Sash $height={1} $color="#5e5e5e" />

      <Panel $grow>
        <Names>
          <Name $height={16}>
            Sequence
            <svg width="15" height="9" viewBox="0 0 15 9"><path d="M0 2.500h9V0l6 4.500L9 9V6.500H0z" /></svg>
          </Name>
          <Name $height={36}>RefSeq Genes</Name>
        </Names>
        <Gutter $shade="#fafafa" />
        <Data>
          <HairLine $color="#808080" $bottom={1} />
          <Sequence />
          <HairLine $color="#c8c8d2" $top={2} />
          <Gene />
          <HairLine $color="#c8c8d2" />
        </Data>
        <ScrollBar label="Features" />
      </Panel>
      <Sash $height={1} $color="#5e5e5e" />

      <StatusBar>
        <StatusCell $width={135}>4 tracks loaded</StatusCell>
        <StatusCell $width={16}>
          <svg viewBox="0 0 14 18"><path d="M4 2h6l3 4v6l-3 4H4l-3-4V6z" fill="#c4c4c4" stroke="#a4a4a4" /></svg>
        </StatusCell>
        <StatusCell $width={150}>chr2:51 226 123</StatusCell>
        <StatusCell />
        <StatusCell $width={100}>279M of 399M</StatusCell>
      </StatusBar>
    </Frame>
  );
}
